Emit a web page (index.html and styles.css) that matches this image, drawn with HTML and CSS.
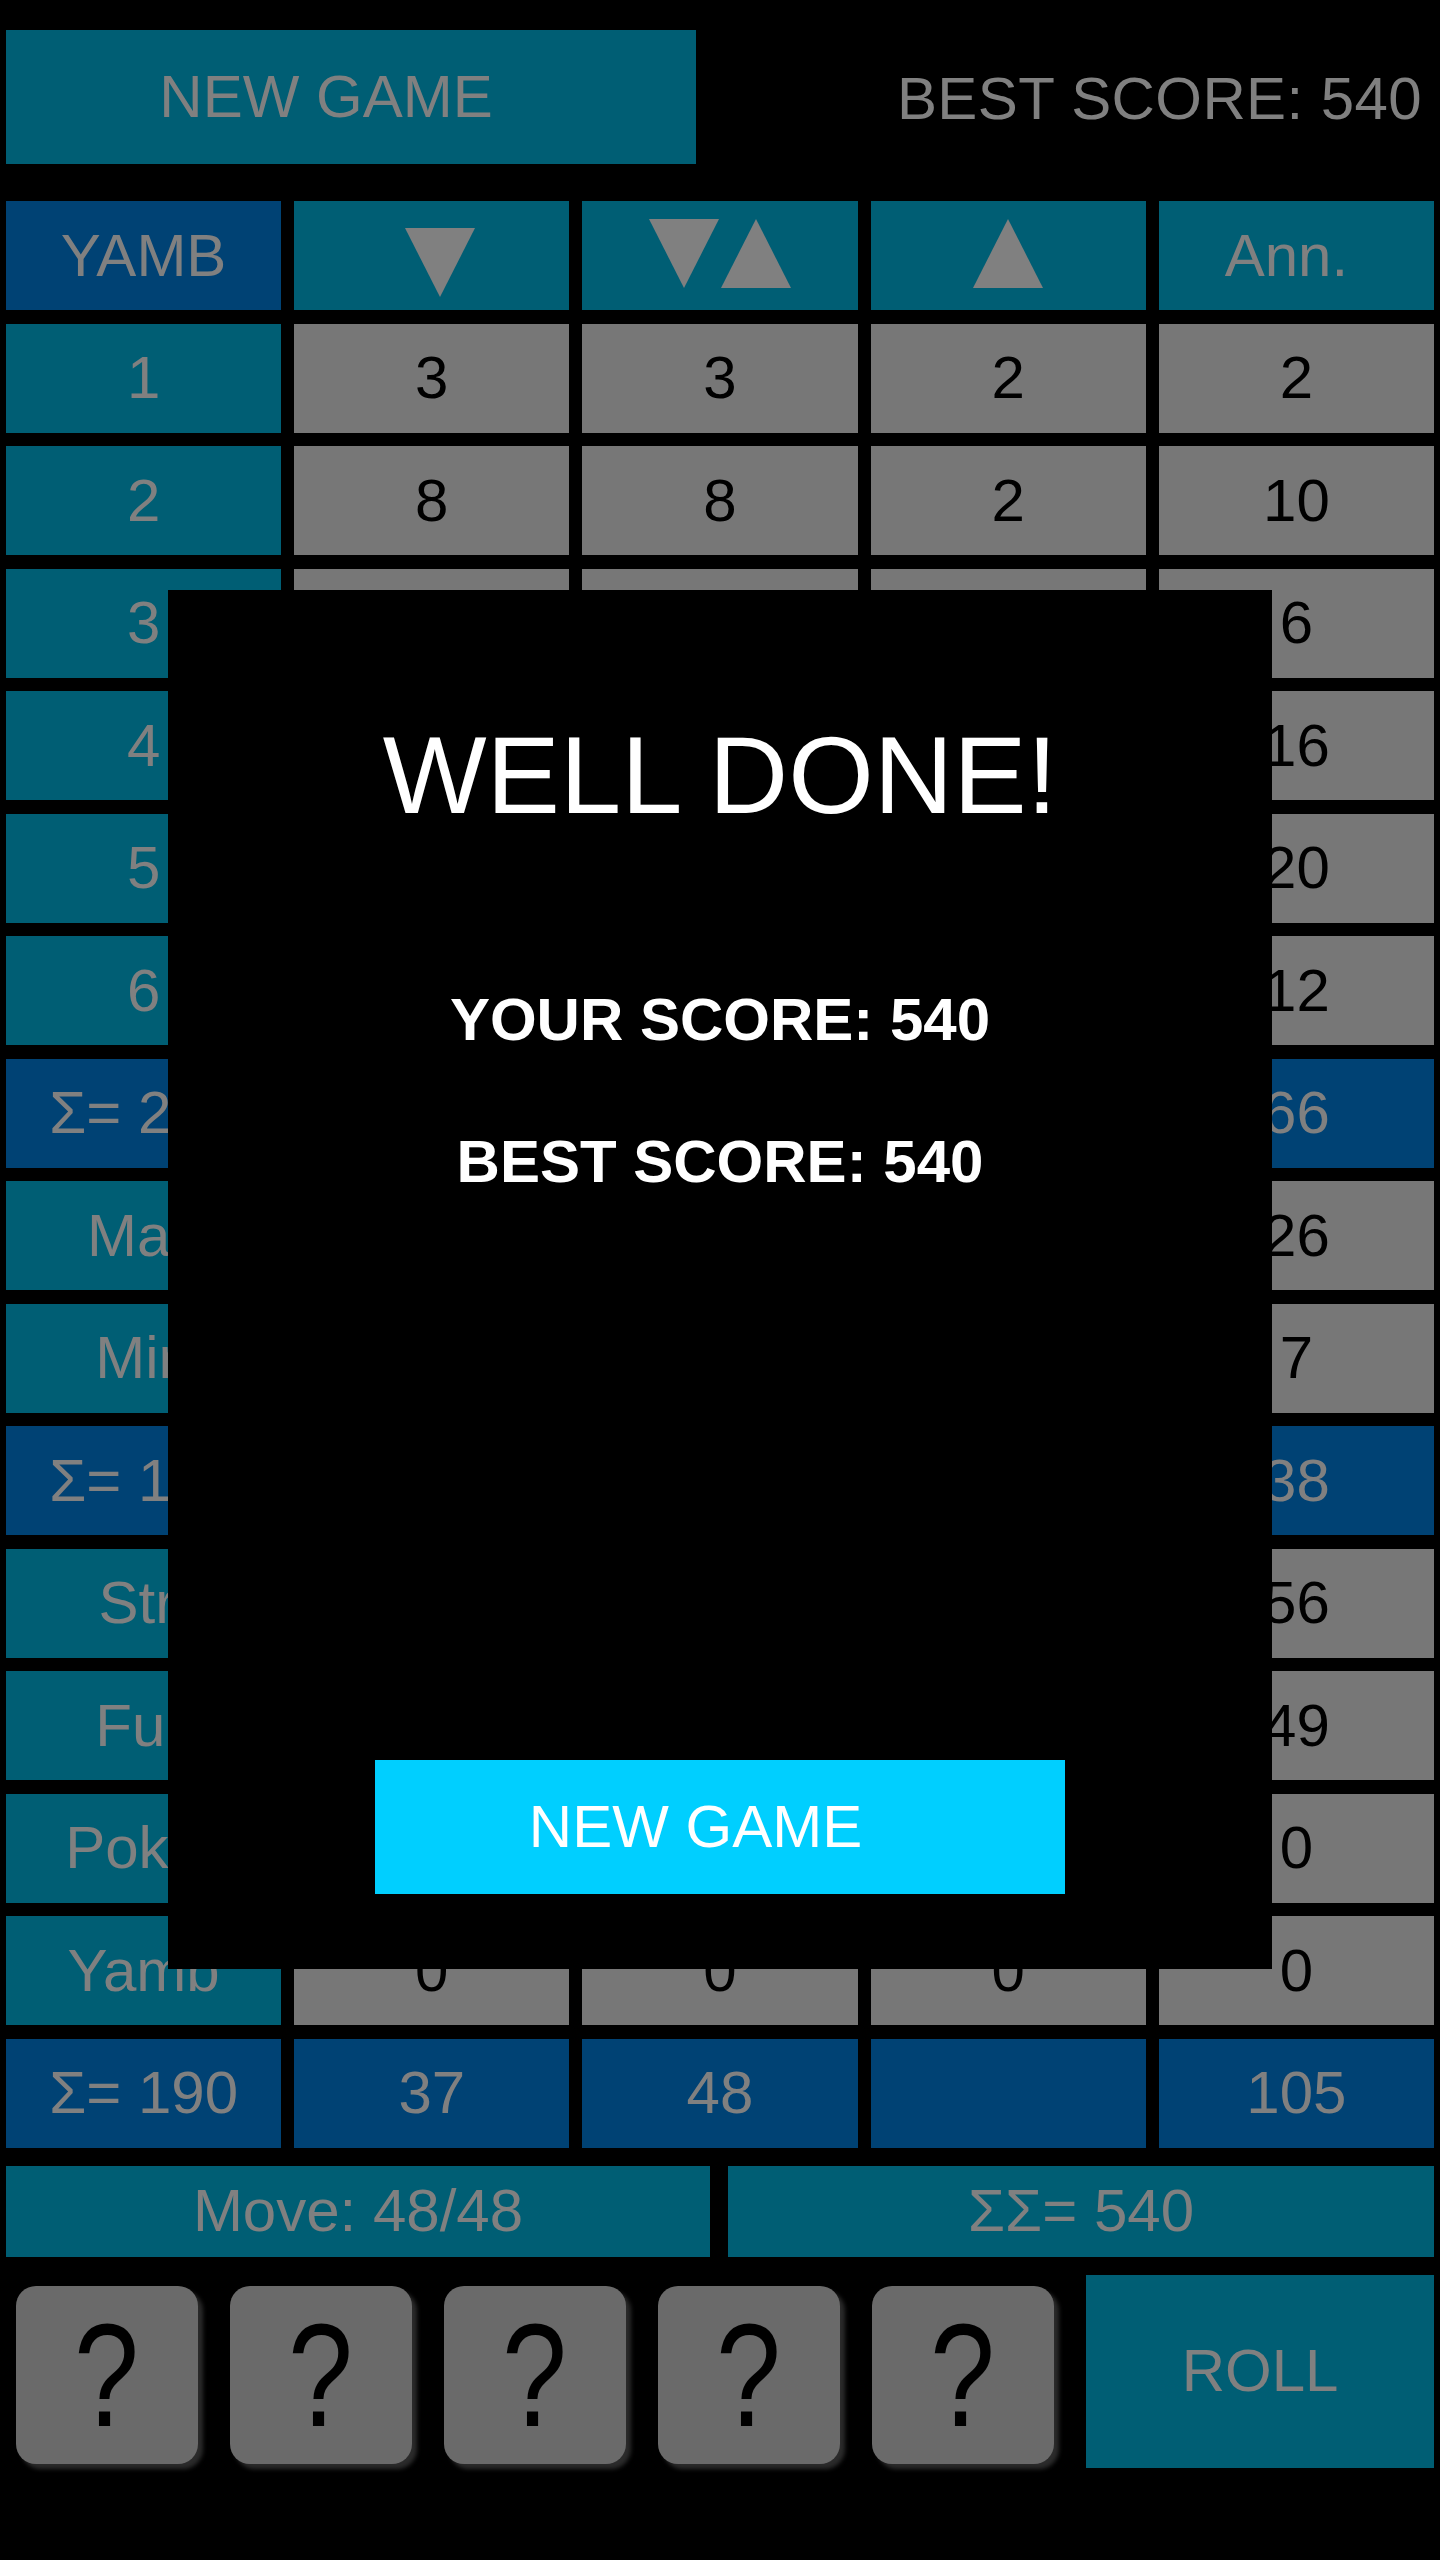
FILE: index.html
```html
<!DOCTYPE html>
<html lang="en">
<head>
<meta charset="utf-8">
<title>Yamb</title>
<link rel="stylesheet" href="styles.css">
</head>
<body>
<div class="app">
  <div class="top">
    <div class="btn-new">NEW GAME</div>
    <div class="best">BEST SCORE: 540</div>
  </div>

  <div class="board">
    <div class="cell sum">YAMB</div>
    <div class="cell hdr"><svg class="tri shift" viewBox="0 0 70 69"><polygon points="0,0 70,0 35,69"/></svg></div>
    <div class="cell hdr"><span class="pair"><svg class="tri" viewBox="0 0 70 69"><polygon points="0,0 70,0 35,69"/></svg><svg class="tri" viewBox="0 0 70 69"><polygon points="35,0 70,69 0,69"/></svg></span></div>
    <div class="cell hdr"><svg class="tri lift" viewBox="0 0 70 69"><polygon points="35,0 70,69 0,69"/></svg></div>
    <div class="cell hdr ann">Ann.</div>

    <div class="cell lbl">1</div><div class="cell num">3</div><div class="cell num">3</div><div class="cell num">2</div><div class="cell num">2</div>
    <div class="cell lbl">2</div><div class="cell num">8</div><div class="cell num">8</div><div class="cell num">2</div><div class="cell num">10</div>
    <div class="cell lbl">3</div><div class="cell num"></div><div class="cell num"></div><div class="cell num"></div><div class="cell num">6</div>
    <div class="cell lbl">4</div><div class="cell num"></div><div class="cell num"></div><div class="cell num"></div><div class="cell num">16</div>
    <div class="cell lbl">5</div><div class="cell num"></div><div class="cell num"></div><div class="cell num"></div><div class="cell num">20</div>
    <div class="cell lbl">6</div><div class="cell num"></div><div class="cell num"></div><div class="cell num"></div><div class="cell num">12</div>
    <div class="cell sum">Σ= 244</div><div class="cell sum"></div><div class="cell sum"></div><div class="cell sum"></div><div class="cell sum">66</div>
    <div class="cell lbl">Max</div><div class="cell num"></div><div class="cell num"></div><div class="cell num"></div><div class="cell num">26</div>
    <div class="cell lbl">Min</div><div class="cell num"></div><div class="cell num"></div><div class="cell num"></div><div class="cell num">7</div>
    <div class="cell sum">Σ= 106</div><div class="cell sum"></div><div class="cell sum"></div><div class="cell sum"></div><div class="cell sum">38</div>
    <div class="cell lbl">Str.</div><div class="cell num"></div><div class="cell num"></div><div class="cell num"></div><div class="cell num">56</div>
    <div class="cell lbl">Full</div><div class="cell num"></div><div class="cell num"></div><div class="cell num"></div><div class="cell num">49</div>
    <div class="cell lbl">Poker</div><div class="cell num"></div><div class="cell num"></div><div class="cell num"></div><div class="cell num">0</div>
    <div class="cell lbl">Yamb</div><div class="cell num">0</div><div class="cell num">0</div><div class="cell num">0</div><div class="cell num">0</div>
    <div class="cell sum">Σ= 190</div><div class="cell sum">37</div><div class="cell sum">48</div><div class="cell sum"></div><div class="cell sum">105</div>
  </div>

  <div class="status">
    <div class="bar">Move: 48/48</div>
    <div class="bar">ΣΣ= 540</div>
  </div>

  <div class="controls">
    <div class="dice">
      <div class="die"><span class="q">?</span></div>
      <div class="die"><span class="q">?</span></div>
      <div class="die"><span class="q">?</span></div>
      <div class="die"><span class="q">?</span></div>
      <div class="die"><span class="q">?</span></div>
    </div>
    <div class="roll">ROLL</div>
  </div>
</div>

<div class="modal">
  <div class="title">WELL DONE!</div>
  <div class="score first">YOUR SCORE: 540</div>
  <div class="score second">BEST SCORE: 540</div>
  <div class="modal-btn">NEW GAME</div>
</div>
</body>
</html>
```
FILE: styles.css
```css
html, body {
  margin: 0;
  padding: 0;
  background: #000;
}

body {
  width: 1440px;
  height: 2560px;
  position: relative;
  overflow: hidden;
  font-family: "Liberation Sans", Arial, sans-serif;
  font-size: 60px;
  color: #808080;
}

.app {
  padding: 30px 6px 0 6px;
}

.top {
  display: flex;
  align-items: center;
  justify-content: space-between;
  height: 134px;
}

.btn-new {
  width: 690px;
  height: 134px;
  background: #005e74;
  color: #808080;
  display: flex;
  align-items: center;
  justify-content: center;
  padding-right: 50px;
  box-sizing: border-box;
  line-height: 1;
}

.best {
  padding-right: 12px;
  line-height: 1;
  padding-top: 4px;
  letter-spacing: 0.4px;
}

.board {
  margin-top: 37px;
  display: grid;
  grid-template-columns: repeat(5, 1fr);
  grid-auto-rows: 109px;
  column-gap: 13px;
  row-gap: 13.5px;
}

.cell {
  display: flex;
  align-items: center;
  justify-content: center;
  line-height: 1;
  white-space: nowrap;
  overflow: hidden;
}

.hdr, .lbl {
  background: #005e74;
  color: #808080;
}

.sum {
  background: #004274;
  color: #808080;
}

.num {
  background: #777777;
  color: #000;
}

.ann {
  padding-right: 20px;
}

.tri {
  width: 70px;
  height: 69px;
  fill: #808080;
  display: block;
}

.tri.shift {
  margin-left: 16px;
  margin-top: 14px;
}

.tri.lift {
  margin-top: -4px;
}

.pair {
  display: flex;
  gap: 2px;
  margin-top: -4px;
}

.status {
  margin-top: 18px;
  display: grid;
  grid-template-columns: 704px 1fr;
  column-gap: 18px;
  height: 91px;
}

.bar {
  background: #005e74;
  color: #808080;
  display: flex;
  align-items: center;
  justify-content: center;
  line-height: 1;
}

.controls {
  margin-top: 18px;
  display: flex;
  justify-content: space-between;
  height: 193px;
}

.dice {
  display: flex;
  gap: 32px;
  padding-left: 10px;
  padding-top: 11px;
}

.die {
  width: 182px;
  height: 178px;
  background: #6a6a6a;
  border-radius: 20px;
  box-shadow: 5px 5px 4px #2b2b2b;
  color: #000;
  display: flex;
  align-items: center;
  justify-content: center;
}

.q {
  display: block;
  font-size: 146px;
  line-height: 1;
  transform: scaleX(0.8);
  margin-top: 2px;
}

.roll {
  width: 348px;
  height: 193px;
  background: #005e74;
  color: #808080;
  display: flex;
  align-items: center;
  justify-content: center;
  line-height: 1;
}

.modal {
  position: absolute;
  left: 168px;
  top: 590px;
  width: 1104px;
  height: 1379px;
  background: #000;
  display: flex;
  flex-direction: column;
  align-items: center;
  box-sizing: border-box;
  padding-top: 130px;
  padding-bottom: 75px;
}

.title {
  color: #fff;
  font-size: 110px;
  line-height: 1;
}

.score {
  color: #fff;
  font-weight: bold;
  font-size: 60px;
  line-height: 1;
}

.score.first {
  margin-top: 160px;
}

.score.second {
  margin-top: 82px;
}

.modal-btn {
  margin-top: auto;
  width: 690px;
  height: 134px;
  background: #00cfff;
  color: #fff;
  display: flex;
  align-items: center;
  justify-content: center;
  box-sizing: border-box;
  padding-right: 49px;
  line-height: 1;
}
```
